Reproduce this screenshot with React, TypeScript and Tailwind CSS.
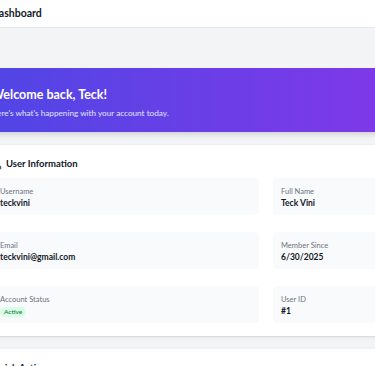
import { User } from "lucide-react";

const ROWS = [
  [
    { label: "Username", value: "teckvini" },
    { label: "Full Name", value: "Teck Vini" },
  ],
  [
    { label: "Email", value: "teckvini@gmail.com" },
    { label: "Member Since", value: "6/30/2025" },
  ],
  [
    { label: "Account Status", badge: "Active" },
    { label: "User ID", value: "#1" },
  ],
];

function InfoBox({ label, value, badge }: { label: string; value?: string; badge?: string }) {
  return (
    <div className="flex h-[37px] flex-col justify-center rounded-[4px] bg-gray-50 px-[8px] pt-[3px]">
      <p className="text-[7.5px] leading-[10px] text-gray-500">{label}</p>
      {badge ? (
        <span className="mt-[2px] self-start rounded-full bg-green-100 px-[4px] text-[6.5px] font-medium leading-[10px] text-green-700">
          {badge}
        </span>
      ) : (
        <p className="text-[8.5px] font-bold leading-[12px] text-gray-900">{value}</p>
      )}
    </div>
  );
}

export default function App() {
  return (
    <div className="h-[366px] w-[375px] overflow-hidden bg-gray-100 font-['Lato',sans-serif]">
      <div className="-ml-[24px] w-[580px]">
        <header className="flex h-[28px] items-center border-b border-gray-200 bg-white px-[15px]">
          <h1 className="text-[10.5px] font-bold text-gray-900">Dashboard</h1>
        </header>

        <main className="pt-[40px]">
          <div className="h-[64px] bg-[linear-gradient(to_right,#4f46e5,#9333ea)] px-[15px] pt-[18px] shadow-md">
            <h2 className="text-[12.5px] font-bold leading-[18px] text-white">Welcome back, Teck!</h2>
            <p className="mt-[3px] text-[8.2px] leading-[12px] text-indigo-100">
              Here's what's happening with your account today.
            </p>
          </div>

          <section className="mt-[13px] bg-white px-[16px] pt-[11px] pb-[13px] shadow-sm">
            <div className="mb-[6px] flex h-[16px] items-center gap-[3px]">
              <User className="h-[11px] w-[11px] text-gray-700" strokeWidth={2.4} />
              <h3 className="text-[9.5px] font-bold text-gray-900">User Information</h3>
            </div>
            <div className="grid grid-cols-2 gap-x-[14px] gap-y-[17px]">
              {ROWS.flat().map((item) => (
                <InfoBox key={item.label} {...item} />
              ))}
            </div>
          </section>

          <section className="mt-[13px] bg-white px-[16px] pt-[12px] shadow-sm">
            <h3 className="text-[9.5px] font-bold text-gray-900">Quick Actions</h3>
          </section>
        </main>
      </div>
    </div>
  );
}
